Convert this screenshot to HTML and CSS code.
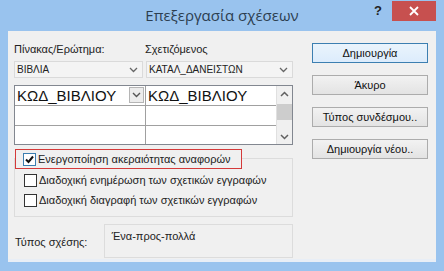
FILE: index.html
```html
<!DOCTYPE html>
<html lang="el">
<head>
    <meta charset="UTF-8">
    <title>Επεξεργασία σχέσεων</title>
    <link rel="stylesheet" href="styles.css">
</head>
<body>
    <div class="window">
        <div class="titlebar">
            <div class="title">Επεξεργασία σχέσεων</div>
            <div class="help">?</div>
            <div class="close">
                <svg width="10" height="10" viewBox="0 0 10 10"><path d="M1 1L9 9M9 1L1 9" stroke="#fff" stroke-width="1.8"/></svg>
            </div>
        </div>

        <div class="content">
            <div class="left">
                <div class="labels">
                    <span class="col">Πίνακας/Ερώτημα:</span>
                    <span class="col">Σχετιζόμενος</span>
                </div>
                <div class="combos">
                    <div class="combo">ΒΙΒΛΙΑ
                        <svg class="chev" width="9" height="6" viewBox="0 0 9 6"><path d="M1 1L4.5 4.5L8 1" fill="none" stroke="#666" stroke-width="1.3"/></svg>
                    </div>
                    <div class="combo">ΚΑΤΑΛ_ΔΑΝΕΙΣΤΩΝ
                        <svg class="chev" width="9" height="6" viewBox="0 0 9 6"><path d="M1 1L4.5 4.5L8 1" fill="none" stroke="#666" stroke-width="1.3"/></svg>
                    </div>
                </div>

                <div class="grid">
                    <div class="rows">
                        <div class="row">
                            <div class="cell first">ΚΩΔ_ΒΙΒΛΙΟΥ
                                <span class="drop">
                                    <svg width="9" height="6" viewBox="0 0 9 6"><path d="M1 1L4.5 4.5L8 1" fill="none" stroke="#555" stroke-width="1.4"/></svg>
                                </span>
                            </div>
                            <div class="cell">ΚΩΔ_ΒΙΒΛΙΟΥ</div>
                        </div>
                        <div class="row"><div class="cell first"></div><div class="cell"></div></div>
                        <div class="row last"><div class="cell first"></div><div class="cell"></div></div>
                    </div>
                    <div class="scroll">
                        <svg width="9" height="6" viewBox="0 0 9 6"><path d="M1 5L4.5 1.5L8 5" fill="none" stroke="#606060" stroke-width="1.5"/></svg>
                        <div class="thumb"></div>
                        <div class="spacer"></div>
                        <svg width="9" height="6" viewBox="0 0 9 6"><path d="M1 1L4.5 4.5L8 1" fill="none" stroke="#606060" stroke-width="1.5"/></svg>
                    </div>
                </div>

                <div class="options">
                    <div class="option highlight">
                        <span class="box checked">
                            <svg width="11" height="11" viewBox="0 0 11 11"><path d="M2 5.5L4.5 8L9 2.5" fill="none" stroke="#111" stroke-width="2"/></svg>
                        </span>
                        <span>Ενεργοποίηση ακεραιότητας αναφορών</span>
                    </div>
                    <div class="group">
                        <div class="option"><span class="box"></span><span>Διαδοχική ενημέρωση των σχετικών εγγραφών</span></div>
                        <div class="option"><span class="box"></span><span>Διαδοχική διαγραφή των σχετικών εγγραφών</span></div>
                    </div>
                </div>

                <div class="reltype">
                    <span class="rel-label">Τύπος σχέσης:</span>
                    <div class="rel-box">Ένα-προς-πολλά</div>
                </div>
            </div>

            <div class="buttons">
                <button class="btn default">Δημιουργία</button>
                <button class="btn">Άκυρο</button>
                <button class="btn">Τύπος συνδέσμου..</button>
                <button class="btn">Δημιουργία νέου..</button>
            </div>
        </div>
    </div>
</body>
</html>
```

FILE: styles.css
```css
body {
    margin: 0;
    font-family: "Liberation Sans", Arial, sans-serif;
    font-size: 11px;
    color: #1a1a1a;
}
.window {
    width: 444px;
    height: 271px;
    background-color: #99c3ee;
    box-sizing: border-box;
    display: flex;
    flex-direction: column;
    padding: 0 8px 9px 8px;
}
.titlebar {
    height: 31px;
    display: flex;
    align-items: flex-start;
    position: relative;
}
.title {
    position: absolute;
    left: 0;
    right: 0;
    top: 5px;
    text-align: center;
    font-family: "Open Sans", sans-serif;
    font-size: 15px;
    color: #2c3e50;
}
.help {
    margin-left: auto;
    margin-top: 3px;
    margin-right: 10px;
    font-weight: bold;
    font-size: 13px;
    color: #222;
    z-index: 1;
}
.close {
    width: 44px;
    height: 20px;
    margin-top: 1px;
    background-color: #c7504f;
    display: flex;
    align-items: center;
    justify-content: center;
    z-index: 1;
}
.content {
    flex: 1;
    background-color: #f0f0f0;
    border-bottom: 3px solid #e8eef6;
    display: flex;
    padding: 12px 0 0 6px;
}
.left {
    width: 279px;
    display: flex;
    flex-direction: column;
}
.labels {
    display: flex;
    height: 13px;
    line-height: 13px;
    color: #222;
}
.col:first-child {
    width: 131px;
}
.combos {
    display: flex;
    gap: 3px;
    margin-top: 5px;
}
.combo {
    height: 17px;
    box-sizing: border-box;
    border: 1px solid #dadada;
    background-color: #f4f4f4;
    font-size: 10px;
    line-height: 15px;
    padding-left: 2px;
    display: flex;
    align-items: center;
    color: #222;
}
.combo:first-child {
    width: 129px;
}
.combo:last-child {
    width: 147px;
}
.chev {
    margin-left: auto;
    margin-right: 4px;
}
.grid {
    margin-top: 7px;
    height: 60px;
    box-sizing: border-box;
    border: 1px solid #828790;
    background-color: #fff;
    display: flex;
}
.rows {
    flex: 1;
    display: flex;
    flex-direction: column;
}
.row {
    display: flex;
    height: 19px;
    border-bottom: 1px solid #a0a0a0;
}
.row.last {
    border-bottom: none;
}
.cell {
    flex: 1;
    font-size: 15px;
    line-height: 20px;
    padding-left: 2px;
    display: flex;
    color: #111;
    white-space: nowrap;
}
.cell.first {
    flex: none;
    width: 128px;
    border-right: 1px solid #a0a0a0;
}
.drop {
    margin: 1px 1px 0 auto;
    width: 15px;
    height: 16px;
    box-sizing: border-box;
    border: 1px solid #b5b5b5;
    background-color: #ececec;
    display: flex;
    align-items: center;
    justify-content: center;
}
.scroll {
    width: 15px;
    background-color: #f0f0f0;
    border-left: 1px solid #e0e0e0;
    display: flex;
    flex-direction: column;
    align-items: center;
    padding: 5px 0 4px;
}
.thumb {
    width: 15px;
    height: 16px;
    margin-top: 7px;
    background-color: #cdcdcd;
}
.spacer {
    flex: 1;
}
.options {
    margin-top: 4px;
    display: flex;
    flex-direction: column;
}
.option {
    display: flex;
    align-items: center;
    height: 20px;
    font-size: 11px;
    color: #222;
    white-space: nowrap;
}
.highlight {
    width: 227px;
    box-sizing: border-box;
    border: 1px solid #d43a3a;
    margin-left: 1px;
    padding-left: 7px;
    background-color: #f0f0f0;
    position: relative;
    z-index: 1;
}
.box {
    flex: none;
    width: 13px;
    height: 13px;
    box-sizing: border-box;
    border: 1px solid #333;
    background-color: #fff;
    margin-right: 2px;
    display: flex;
    align-items: center;
    justify-content: center;
}
.box.checked {
    border-color: #3c7fb1;
}
.group {
    margin-top: -11px;
    padding: 11px 0 0 9px;
    height: 46px;
    border: 1px solid #dcdcdc;
}
.reltype {
    margin-top: 7px;
    display: flex;
    align-items: center;
}
.rel-label {
    width: 89px;
    padding-left: 1px;
    padding-top: 1px;
    color: #222;
}
.rel-box {
    width: 190px;
    height: 34px;
    box-sizing: border-box;
    border: 1px solid #dcdcdc;
    padding: 5px 0 0 7px;
    color: #222;
}
.buttons {
    display: flex;
    flex-direction: column;
    gap: 12px;
    margin-left: 19px;
}
.btn {
    width: 116px;
    height: 20px;
    font-family: "Liberation Sans", Arial, sans-serif;
    font-size: 11px;
    color: #111;
    border: 1px solid #acacac;
    background: linear-gradient(#f2f2f2, #e3e3e3);
    padding: 0;
}
.btn.default {
    border-color: #3c7fb1;
    background: linear-gradient(#eaf4fc, #dcecfc);
}
```
